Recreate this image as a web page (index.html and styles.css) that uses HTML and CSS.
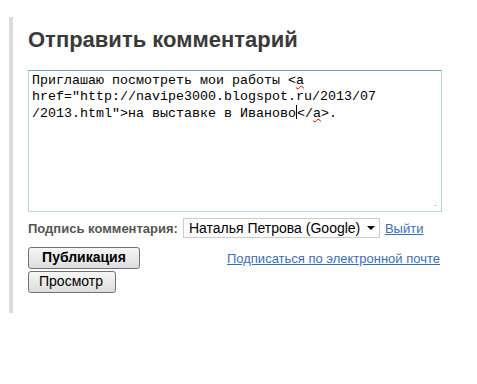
FILE: index.html
```html
<!DOCTYPE html>
<html lang="ru">
<head>
    <meta charset="UTF-8">
    <title>Отправить комментарий</title>
    <link rel="stylesheet" href="styles.css">
</head>
<body>

<div class="comment-form">
    <h3 class="comment-title">Отправить комментарий</h3>
    <div class="comment-body">Приглашаю посмотреть мои работы &lt;<span class="typo">a</span>
href="http://navipe3000.blogspot.ru/2013/07
/2013.html"&gt;на выставке в Иваново<span class="caret"></span>&lt;/<span class="typo">a</span>&gt;.<span class="grip"></span></div>

    <div class="identity-row">
        <span class="identity-label">Подпись комментария:</span>
        <span class="identity-select">Наталья Петрова (Google) <span class="arrow"></span></span>
        <a href="#" class="link">Выйти</a>
    </div>

    <div class="buttons-row">
        <span class="btn btn-main">Публикация</span>
        <a href="#" class="link subscribe">Подписаться по электронной почте</a>
    </div>
    <span class="btn btn-preview">Просмотр</span>
</div>

</body>
</html>
```

FILE: styles.css
```css
body {
    margin: 0;
    padding: 17px 0 0 9px;
    background-color: #fff;
    font-family: 'Liberation Sans', Arial, sans-serif;
    color: #222;
}

.comment-form {
    width: 431px;
    height: 296px;
    border-left: 4px solid #dcdcdc;
    padding-left: 15px;
    box-sizing: border-box;
}

.comment-title {
    margin: 0;
    padding-top: 9px;
    font-size: 22px;
    line-height: 27px;
    font-weight: bold;
    color: #3a3a3a;
}

.comment-body {
    position: relative;
    margin-top: 17px;
    width: 414px;
    height: 142px;
    box-sizing: border-box;
    border: 1px solid #b7d4e0;
    border-top-color: #7aa0b8;
    padding: 2px 3px;
    font-family: 'Liberation Mono', 'Courier New', monospace;
    font-size: 13.33px;
    line-height: 16px;
    white-space: pre;
    color: #000;
}

.typo {
    text-decoration: underline wavy #d00;
    text-decoration-thickness: 1px;
}

.caret {
    display: inline-block;
    width: 0;
    height: 14px;
    vertical-align: -2px;
    border-left: 1px solid #000;
}

.grip {
    position: absolute;
    right: 3px;
    bottom: 3px;
    width: 7px;
    height: 7px;
    background-image: radial-gradient(circle, #999 0.6px, transparent 0.8px);
    background-size: 3px 3px;
    clip-path: polygon(100% 0, 100% 100%, 0 100%);
}

.identity-row {
    display: flex;
    align-items: center;
    margin-top: 6px;
    font-size: 13px;
}

.identity-label {
    font-weight: bold;
    color: #555;
    margin-right: 5px;
}

.identity-select {
    display: inline-flex;
    align-items: center;
    justify-content: space-between;
    width: 197px;
    height: 20px;
    box-sizing: border-box;
    border: 1px solid #ccc;
    padding: 0 4px 0 5px;
    font-size: 14px;
    color: #000;
}

.arrow {
    width: 0;
    height: 0;
    border-left: 4px solid transparent;
    border-right: 4px solid transparent;
    border-top: 4px solid #000;
}

.link {
    color: #3b6eb3;
    text-decoration: underline;
    font-size: 13px;
    margin-left: 5px;
    white-space: nowrap;
}

.buttons-row {
    display: flex;
    align-items: center;
    margin-top: 9px;
}

.subscribe {
    margin-left: 87px;
}

.btn {
    display: inline-block;
    box-sizing: border-box;
    height: 22px;
    line-height: 19px;
    padding: 0 10px;
    border: 1px solid #707070;
    border-radius: 3px;
    background: linear-gradient(#f6f6f6, #dddddd);
    font-size: 14px;
    color: #000;
}

.btn-main {
    width: 113px;
    font-weight: bold;
    text-align: center;
}

.btn-preview {
    width: 88px;
    margin-top: 2px;
    padding: 0 0 0 10px;
}
```
